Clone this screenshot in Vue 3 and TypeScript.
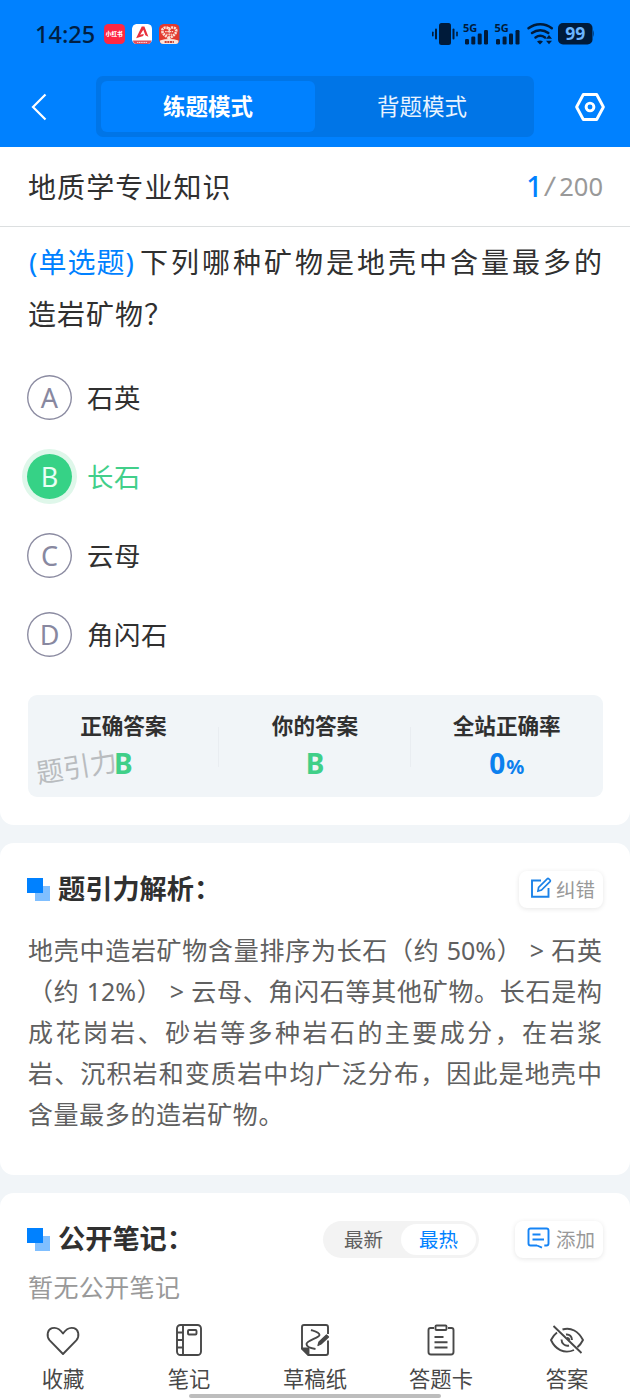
<script setup lang="ts">
interface Option { key: string; text: string; chosen?: boolean }

const options: Option[] = [
  { key: 'A', text: '石英' },
  { key: 'B', text: '长石', chosen: true },
  { key: 'C', text: '云母' },
  { key: 'D', text: '角闪石' },
]

const analysis: string[] = [
  '地壳中造岩矿物含量排序为长石（约 50%） > 石英',
  '（约 12%） > 云母、角闪石等其他矿物。长石是构',
  '成花岗岩、砂岩等多种岩石的主要成分，在岩浆',
  '岩、沉积岩和变质岩中均广泛分布，因此是地壳中',
  '含量最多的造岩矿物。',
]
</script>

<template>
  <div class="screen">
    <header class="top">
      <div class="status">
        <span class="clock">14:25</span>
        <div class="apps">
          <span class="app app-red">小红书</span>
          <svg class="app" viewBox="0 0 20 20">
            <rect width="20" height="20" rx="4.5" fill="#fff" />
            <path d="M1 16h18a4 4 0 0 1-4 4H5a4 4 0 0 1-4-4Z" fill="#e2505c" />
            <path d="M4 14 9.500 2.500h2.600L16 12.500l-3-1.600L11 5.500 8 10.500l3.500-.8-.6 2L4 14Z" fill="#e8303c" />
            <path d="M5 18h10" stroke="#fff" stroke-width=".8" stroke-dasharray="1.200 .5" />
          </svg>
          <svg class="app" viewBox="0 0 20 20">
            <rect width="20" height="20" rx="4.500" fill="#e23a2e" />
            <path d="M1 16q9-2.600 18 0v1a3 3 0 0 1-3 3H4a3 3 0 0 1-3-3Z" fill="#fbe3d8" />
            <path d="M10 14C6 11.500 3.200 9.500 3.200 6.500c0-3.500 4.800-4 6.800-1.500 2-2.500 6.800-2 6.800 1.500 0 3-2.800 5-6.800 7.500Z" fill="none" stroke="#fbe0d6" stroke-width="2.600" stroke-dasharray="2 .7" />
            <path d="M6 7.500h8M10 5v8M7 10h6" stroke="#fbe0d6" stroke-width="1.100" stroke-dasharray="1.500 .6" />
            <path d="M5.500 17.600h9" stroke="#c74135" stroke-width="1.800" stroke-dasharray="2 .6" />
          </svg>
        </div>
        <svg class="signals" viewBox="0 0 164 32" fill="#001b3a">
          <g transform="translate(0 4)">
            <rect x="9" y="1" width="12" height="22" rx="2.500" />
            <rect x="5" y="6.500" width="2" height="11" rx="1" /><rect x="2" y="9.500" width="1.600" height="5" rx=".8" />
            <rect x="22.500" y="6.500" width="2" height="11" rx="1" /><rect x="26.200" y="9.500" width="1.600" height="5" rx=".8" />
            <text x="33" y="9.500" class="net">5G</text>
            <rect x="35" y="17" width="4" height="5.500" rx="1.200" /><rect x="41.300" y="14.500" width="4" height="8" rx="1.200" /><rect x="47.700" y="11.500" width="4" height="11" rx="1.200" /><rect x="54" y="8" width="4" height="14.500" rx="1.200" />
            <text x="64.500" y="9.500" class="net">5G</text>
            <rect x="66" y="17" width="4" height="5.500" rx="1.200" /><rect x="72.600" y="14.500" width="4" height="8" rx="1.200" /><rect x="79" y="11.500" width="4" height="11" rx="1.200" /><rect x="85.500" y="8" width="4" height="14.500" rx="1.200" />
            <g fill="none" stroke="#001b3a" stroke-width="2.500" stroke-linecap="round">
              <path d="M98.500 6.300c7-5.400 16.500-5.400 23.300 0" /><path d="M102 11c5-3.800 11.500-3.800 16.300 0" /><path d="M105.500 15.500c3-2.200 6.500-2.200 9.500 0" />
            </g>
            <path d="M107 19.500q3-2 6 0l-3 3ZM116 16.800l3-3.800 3 3.800ZM116 18.800h6l-3 3.500Z" />
            <rect x="128" y="1" width="34.500" height="21.500" rx="5" /><path d="M163 8q2 3.500 0 7Z" opacity=".6" />
            <text x="145.300" y="18" class="battery">99</text>
          </g>
        </svg>
      </div>
      <nav class="modes">
        <svg class="back" viewBox="0 0 16 28"><path d="M14.500 1.500 2 14l12.500 12.500" fill="none" stroke="#fff" stroke-width="2.200" /></svg>
        <div class="switch">
          <span class="mode active">练题模式</span>
          <span class="mode">背题模式</span>
        </div>
        <svg class="gear" viewBox="0 0 32 30" fill="none" stroke="#fff" stroke-width="2.900" stroke-linejoin="round">
          <path d="M9.300 2.500h13.400L29.400 15l-6.700 12.500H9.300L2.600 15Z" /><circle cx="16" cy="15" r="3.900" />
        </svg>
      </nav>
    </header>

    <main>
      <section class="card question-card">
        <div class="subject">
          <span class="name">地质学专业知识</span>
          <span class="progress"><b>1</b><i>/</i>200</span>
        </div>
        <div class="question">
          <div class="q-line"><span class="tag">(单选题)</span><span class="stem">下列哪种矿物是地壳中含量最多的</span></div>
          <div class="q-line">造岩矿物？</div>
        </div>
        <ul class="options">
          <li v-for="o in options" :key="o.key" :class="{ chosen: o.chosen }">
            <span class="letter">{{ o.key }}</span><span class="answer">{{ o.text }}</span>
          </li>
        </ul>
        <div class="result">
          <div class="cell"><span class="label">正确答案</span><span class="value">B</span></div>
          <div class="cell"><span class="label">你的答案</span><span class="value">B</span></div>
          <div class="cell"><span class="label">全站正确率</span><span class="value rate">0<small>%</small></span></div>
          <span class="watermark">题引力</span>
        </div>
      </section>

      <section class="card analysis-card">
        <div class="heading">
          <span class="mark"></span>
          <h2>题引力解析：</h2>
          <button class="chip fix">
            <svg viewBox="0 0 22 22" fill="none" stroke="#1b82e8" stroke-width="1.900">
              <path d="M11 3.500H2v16.200h16.500V11" /><path d="m8 14 .6-3.600 8.600-8.600q.8-.7 1.600 0l1.200 1.200q.7.800 0 1.600l-8.500 8.500Z" stroke-width="1.700" />
            </svg>
            <span>纠错</span>
          </button>
        </div>
        <div class="body">
          <p v-for="line in analysis" :key="line">{{ line }}</p>
        </div>
      </section>

      <section class="card notes-card">
        <div class="heading">
          <span class="mark"></span>
          <h2>公开笔记：</h2>
          <div class="sort"><span>最新</span><span class="on">最热</span></div>
          <button class="chip add">
            <svg viewBox="0 0 23 22" fill="none" stroke="#1684f5" stroke-width="1.900">
              <path d="M10 18.500H3.500q-2 0-2-2v-13q0-2 2-2h16q2 0 2 2v13q0 2-2 2h-2.200M10 18.500l5 2.200" /><path d="M5.500 7.500h8M5.500 12.500h11.500" />
            </svg>
            <span>添加</span>
          </button>
        </div>
        <p class="empty">暂无公开笔记</p>
      </section>
    </main>

    <footer class="tabs">
      <div class="tab">
        <svg viewBox="0 0 36 36"><path d="M18 32 4.700 18.300C1 14 2.500 7.500 7 6.200c4.500-1.300 8 1 11 5.300 3-4.300 6.500-6.600 11-5.300 4.500 1.300 6 7.800 2.300 12.100Z" /></svg>
        <span>收藏</span>
      </div>
      <div class="tab">
        <svg viewBox="0 0 36 36"><rect x="6" y="3" width="24" height="30" rx="3.500" /><path d="M12 3v30M6 10.500h6M6 18h6M6 25.500h6" /><rect x="17" y="8" width="8.500" height="4.500" rx="1" /></svg>
        <span>笔记</span>
      </div>
      <div class="tab">
        <svg viewBox="0 0 36 36"><path d="M31 12V5q0-2-2-2H7Q5 3 5 5v21.500l6.500 6.500H29q2 0 2-2V18.500" /><path d="M5 26.500h6.500V33Z" fill="#484848" /><path d="M14 8c3 1 8.500 2.300 8.500 5S9.500 18.500 9.500 22s5.500 4.500 9 5" /><path d="m21 23.500 1-3.500 7.500-7 2 2-7.500 7Z" fill="#484848" stroke-width="1.300" /></svg>
        <span>草稿纸</span>
      </div>
      <div class="tab">
        <svg viewBox="0 0 36 36"><path d="M11 6H7.500Q5.500 6 5.500 8v22q0 2.500 2.500 2.500h20q2.500 0 2.500-2.500V8q0-2-2-2H25" /><rect x="12.500" y="3.500" width="11" height="4.500" rx="1" /><path d="M11.500 15h9M11.500 20.200h13M11.500 25.500h13" /></svg>
        <span>答题卡</span>
      </div>
      <div class="tab">
        <svg viewBox="0 0 36 36"><path d="M13.500 7.500c8.500-2.800 16 2 20.500 10.500-1.500 3-3.400 5.400-5.600 7.200M25 28C15 32.500 6 27 2 18c1.500-3 3.500-5.600 6-7.500M4.500 4l28 27" /><path d="M17 12.500c3.500-.5 6 2 6 5.500M20 23.500c-4 1-7.500-2-7.500-6M18 16q2 0 2.500 2.500" /></svg>
        <span>答案</span>
      </div>
      <span class="home"></span>
    </footer>
  </div>
</template>

<style>
body { margin: 0; background: #f1f5f8; }
</style>

<style scoped>
* { box-sizing: border-box; }
.screen { position: relative; width: 630px; height: 1400px; overflow: hidden; background: #f1f5f8; color: #303030; font-family: "Noto Sans", "Noto Sans CJK SC", sans-serif; }
p, h2, ul { margin: 0; padding: 0; }
button { border: 0; font: inherit; }

.top { height: 147px; background: #0081ff; }
.status { display: flex; align-items: center; height: 68px; padding: 0 36px 0 35px; }
.clock { width: 69px; font-size: 23.500px; font-weight: 500; color: #001f43; white-space: nowrap; }
.apps { display: flex; gap: 7px; }
.app { width: 20.500px; height: 20.500px; border-radius: 4.500px; }
.app-red { display: grid; place-items: center; background: #ff2742; color: #fff; font-size: 5.600px; font-weight: 900; white-space: nowrap; }
.signals { width: 164px; height: 32px; margin-left: auto; overflow: visible; }
.net { font-size: 11px; font-weight: 700; }
.battery { font-size: 17.500px; font-weight: 700; fill: #6bb5ff; text-anchor: middle; }
.modes { display: flex; align-items: center; height: 77px; padding: 0 24px 0 31px; }
.back { width: 16px; height: 28px; }
.switch { display: flex; width: 438px; height: 61px; margin-left: 49px; padding: 5px; border-radius: 7px; background: #0075e7; }
.mode { flex: 1; display: grid; place-items: center; padding-bottom: 2px; color: #e8f3ff; font-size: 22.500px; border-radius: 6px; }
.mode.active { background: #0081ff; color: #fff; font-weight: 700; }
.gear { width: 32px; height: 30px; margin-left: auto; }

.card { background: #fff; border-radius: 14px; }
.question-card { height: 678px; border-radius: 0 0 14px 14px; }
.subject { display: flex; justify-content: space-between; align-items: center; height: 80px; padding: 0 27px 2px 28px; border-bottom: 1px solid #dcdfe0; }
.name { font-size: 28px; letter-spacing: 1.100px; }
.progress { display: flex; align-items: center; font-size: 25.500px; color: #999; }
.progress b { font-size: 28px; font-weight: 500; color: #0081ff; }
.progress i { font-style: normal; font-size: 27px; margin: 0 4px 0 3px; transform: skewX(-7deg); }
.question { padding: 9px 28px 0; font-size: 28px; line-height: 52px; letter-spacing: 1px; }
.q-line { display: flex; height: 52px; white-space: nowrap; }
.tag { width: 112px; padding-left: 1px; color: #0081ff; }
.stem { flex: 1; text-align: justify; text-align-last: justify; letter-spacing: 0; }
.options { list-style: none; padding-top: 18px; }
.options li { display: flex; align-items: center; gap: 15px; height: 79px; padding-left: 27px; font-size: 26.400px; letter-spacing: .6px; }
.answer { padding-bottom: 2px; }
.letter { display: grid; place-items: center; width: 45px; height: 45px; box-shadow: inset 0 0 0 1.400px #8c8ca2; border-radius: 50%; color: #8888a0; font-size: 27px; letter-spacing: 0; }
.chosen { color: #42cf8a; }
.chosen .letter { background: #36d286; color: #e9fff4; box-shadow: 0 0 0 5px #dff7ea; }
.result { position: relative; display: flex; height: 102px; margin: 21px 27.500px 0; padding-top: 12px; border-radius: 9px; background: #f1f5f8; }
.cell { flex: 1; display: flex; flex-direction: column; align-items: center; position: relative; }
.cell + .cell::before { content: ""; position: absolute; left: -1px; top: 20px; width: 1px; height: 40px; background: #e9edf1; }
.label { font-size: 21.600px; font-weight: 700; line-height: 38px; }
.value { font-size: 28px; font-weight: 700; line-height: 37px; color: #40cf88; }
.rate { color: #0c80ee; }
.rate small { font-size: 20px; margin-left: 1px; }
.watermark { position: absolute; left: 8px; top: 53px; font-size: 27px; line-height: 38px; color: #b9bcbf; transform: rotate(-9deg); white-space: nowrap; }

.analysis-card { height: 332px; margin-top: 18px; }
.heading { display: flex; align-items: center; padding: 0 27px 0 27px; }
.analysis-card .heading { height: 92px; }
.mark { position: relative; width: 23px; height: 23px; background: linear-gradient(#80bfff, #80bfff) 100% 100% / 15px 15px no-repeat; }
.mark::before { content: ""; position: absolute; left: 0; top: 0; width: 16px; height: 15.500px; background: #0081ff; }
h2 { margin-left: 8px; font-size: 27.200px; line-height: 40px; font-weight: 700; white-space: nowrap; }
.chip { display: flex; align-items: center; height: 37px; padding: 0; border-radius: 8px; background: #fff; color: #999; font-size: 19.500px; box-shadow: 0 1px 5px rgba(0, 0, 0, .1); white-space: nowrap; }
.chip span { padding-bottom: 2px; }
.fix { width: 84px; margin-left: auto; padding-left: 11px; gap: 4px; }
.fix svg { width: 22px; height: 22px; margin-top: -3px; }
.add { width: 88px; margin-left: 36px; padding-left: 12px; gap: 6px; }
.add svg { width: 23px; height: 22px; margin-top: -2px; }
.body { margin-top: -5px; padding: 0 28px; font-size: 25px; color: #606060; }
.body p { height: 41px; line-height: 41px; white-space: nowrap; text-align: justify; text-align-last: justify; }
.body p:last-child { text-align-last: left; letter-spacing: .6px; }

.notes-card { height: 207px; margin-top: 18px; border-radius: 14px 14px 0 0; }
.notes-card .heading { height: 92px; }
.sort { display: flex; width: 156px; height: 37px; margin-left: auto; padding: 3px; border-radius: 19px; background: #f3f3f3; font-size: 19.500px; color: #606060; }
.sort span { flex: 1; display: grid; place-items: center; padding-bottom: 2px; border-radius: 16px; }
.sort .on { background: #fff; color: #0081ff; }
.empty { padding-left: 28px; margin-top: -18px; font-size: 25px; line-height: 40px; letter-spacing: .4px; color: #999; }

.tabs { position: absolute; left: 0; right: 0; bottom: 0; display: flex; height: 90px; background: #fff; }
.tab { flex: 1; display: flex; flex-direction: column; align-items: center; padding-top: 12px; color: #484848; font-size: 21.300px; line-height: 30px; }
.tab svg { width: 36px; height: 36px; fill: none; stroke: #484848; stroke-width: 1.900; stroke-linejoin: round; margin-bottom: 6px; }
.home { position: absolute; left: 189px; bottom: 2px; width: 252px; height: 4px; border-radius: 2px; background: #bdbdbd; }
</style>
